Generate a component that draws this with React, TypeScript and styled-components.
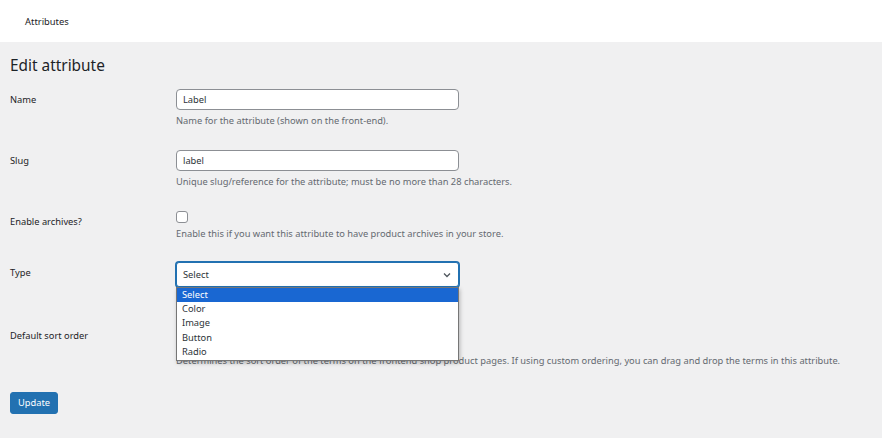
import styled, { createGlobalStyle } from 'styled-components';

const GlobalStyle = createGlobalStyle`
  html, body {
    margin: 0;
    padding: 0;
    background: #f0f0f1;
    font-family: "Noto Sans", "Open Sans", sans-serif;
    color: #1d2327;
  }
`;

const TYPE_OPTIONS = ['Select', 'Color', 'Image', 'Button', 'Radio'];

function Chevron() {
  return (
    <svg width="10" height="10" viewBox="0 0 10 10">
      <path d="M2 3.5 L5 6.5 L8 3.5" fill="none" stroke="#50575e" strokeWidth="1.3" />
    </svg>
  );
}

export default function App() {
  return (
    <>
      <GlobalStyle />
      <TopBar>
        <TopTitle>Attributes</TopTitle>
      </TopBar>
      <Main>
        <Heading>Edit attribute</Heading>
        <FormTable>
          <Row>
            <Label>Name</Label>
            <Field>
              <TextInput>Label</TextInput>
              <Description>Name for the attribute (shown on the front-end).</Description>
            </Field>
          </Row>
          <Row>
            <Label>Slug</Label>
            <Field>
              <TextInput>label</TextInput>
              <Description>Unique slug/reference for the attribute; must be no more than 28 characters.</Description>
            </Field>
          </Row>
          <Row $pad={22}>
            <Label>Enable archives?</Label>
            <Field>
              <Checkbox />
              <Description>Enable this if you want this attribute to have product archives in your store.</Description>
            </Field>
          </Row>
          <Row $pad={38}>
            <Label>Type</Label>
            <Field>
              <SelectWrap>
                <SelectBox $focused>
                  <span>Select</span>
                  <Chevron />
                </SelectBox>
                <OptionList>
                  {TYPE_OPTIONS.map((o, i) => (
                    <OptionItem key={o} $active={i === 0}>
                      {o}
                    </OptionItem>
                  ))}
                </OptionList>
              </SelectWrap>
            </Field>
          </Row>
          <Row $pad={22}>
            <Label>Default sort order</Label>
            <Field>
              <SelectBox>
                <span>Custom ordering</span>
                <Chevron />
              </SelectBox>
              <Description $offset={4}>
                Determines the sort order of the terms on the frontend shop product pages. If using custom ordering, you can drag and drop the terms in this attribute.
              </Description>
            </Field>
          </Row>
        </FormTable>
        <UpdateButton>Update</UpdateButton>
      </Main>
    </>
  );
}

const TopBar = styled.header`
  height: 42px;
  background: #fff;
  display: flex;
  align-items: center;
  padding-left: 25px;
`;

const TopTitle = styled.span`
  font-size: 9.4px;
  color: #1d2327;
`;

const Main = styled.main`
  padding: 14px 10px 20px 10px;
`;

const Heading = styled.h1`
  margin: 0;
  font-size: 15.4px;
  font-weight: 400;
  line-height: 20px;
  color: #1d2327;
`;

const FormTable = styled.div`
  display: flex;
  flex-direction: column;
  margin-top: 13px;
`;

const Row = styled.div<{ $pad?: number }>`
  display: grid;
  grid-template-columns: 166px 1fr;
  padding-bottom: ${(p) => p.$pad ?? 23}px;
`;

const Label = styled.div`
  font-size: 9.3px;
  line-height: 13px;
  padding-top: 3.5px;
  color: #1d2327;
`;

const Field = styled.div`
  display: flex;
  flex-direction: column;
  align-items: flex-start;
`;

const TextInput = styled.div`
  box-sizing: border-box;
  width: 283px;
  height: 21px;
  background: #fff;
  border: 1px solid #8c8f94;
  border-radius: 4px;
  padding: 0 6px;
  font-size: 9.3px;
  line-height: 19px;
  color: #2c3338;
`;

const Checkbox = styled.div`
  box-sizing: border-box;
  width: 12px;
  height: 12px;
  background: #fff;
  border: 1px solid #8c8f94;
  border-radius: 3px;
`;

const Description = styled.div<{ $offset?: number }>`
  margin-top: ${(p) => p.$offset ?? 4}px;
  font-size: 9.3px;
  line-height: 13px;
  color: #646970;
  white-space: nowrap;
`;

const SelectWrap = styled.div`
  position: relative;
`;

const SelectBox = styled.div<{ $focused?: boolean }>`
  box-sizing: border-box;
  width: 283px;
  height: 25px;
  background: #fff;
  border: 1px solid ${(p) => (p.$focused ? '#2271b1' : '#8c8f94')};
  box-shadow: ${(p) => (p.$focused ? '0 0 0 1px #2271b1' : 'none')};
  border-radius: 3px;
  padding: 0 6px 0 6px;
  display: flex;
  align-items: center;
  justify-content: space-between;
  font-size: 9.3px;
  color: #2c3338;
`;

const OptionList = styled.ul`
  position: absolute;
  top: 25px;
  left: 0;
  width: 283px;
  box-sizing: border-box;
  margin: 0;
  padding: 0 0 1px 0;
  list-style: none;
  background: #fff;
  border: 1px solid #767676;
  box-shadow: 1px 2px 4px rgba(0, 0, 0, 0.25);
  z-index: 10;
`;

const OptionItem = styled.li<{ $active?: boolean }>`
  height: 14.2px;
  line-height: 14px;
  padding-left: 5px;
  font-size: 9.3px;
  background: ${(p) => (p.$active ? '#1967d2' : '#fff')};
  color: ${(p) => (p.$active ? '#fff' : '#2c3338')};
`;

const UpdateButton = styled.button`
  height: 22px;
  padding: 0 7px;
  background: #2271b1;
  color: #fff;
  border: 1px solid #2271b1;
  border-radius: 3px;
  font-family: inherit;
  font-size: 9.3px;
`;
